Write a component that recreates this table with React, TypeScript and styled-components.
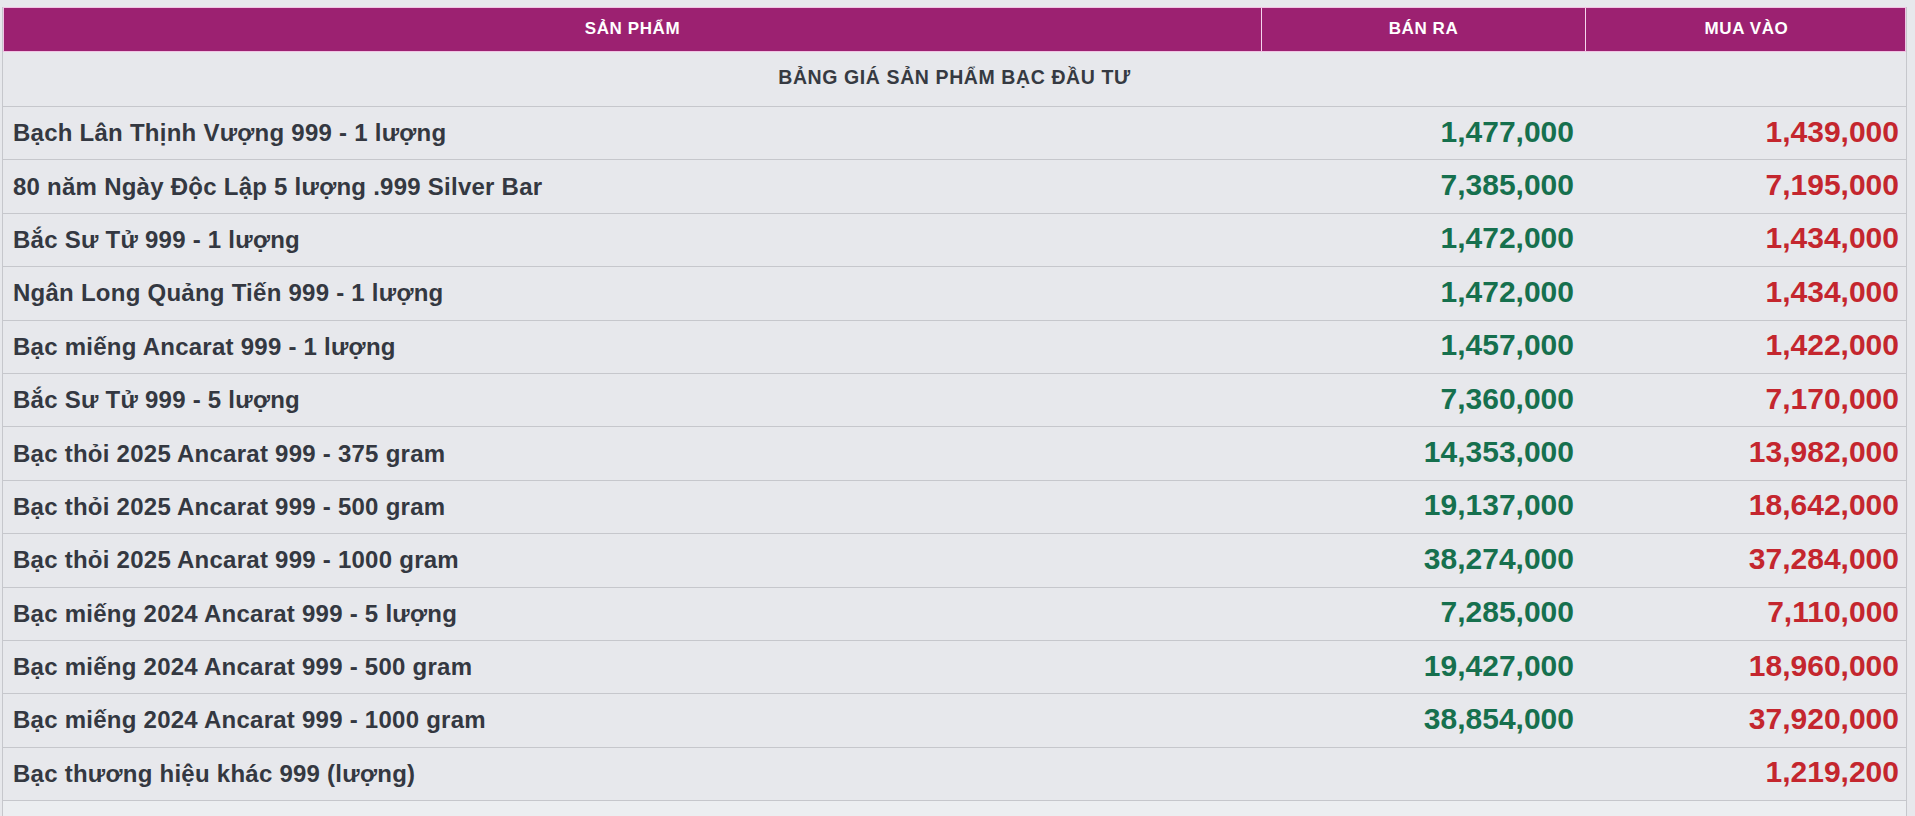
import React from "react";
import styled, { createGlobalStyle } from "styled-components";

const GlobalStyle = createGlobalStyle`
  html, body {
    margin: 0;
    padding: 0;
    background: #e7e8ec;
    font-family: "Liberation Sans", Arial, sans-serif;
  }
  * { box-sizing: border-box; }
`;

const Page = styled.div`
  min-height: 816px;
  padding: 7px 0 0 2px;
  background: #e7e8ec;
  overflow: hidden;
`;

const Table = styled.div`
  width: 1905px;
  border-left: 1px solid #c6c7cc;
  border-right: 1px solid #c6c7cc;
`;

const COLS = "1257px 324px 322px";

const HeaderRow = styled.div`
  display: grid;
  grid-template-columns: ${COLS};
  height: 45px;
  background: #9c2171;
  border: 1px solid #f1c3e4;
`;

const HeaderCell = styled.div<{ $first?: boolean }>`
  display: flex;
  align-items: center;
  justify-content: center;
  color: #ffffff;
  font-weight: 700;
  font-size: 17px;
  letter-spacing: 0.6px;
  border-left: ${(p) => (p.$first ? "none" : "1px solid #f5d6ec")};
  padding-bottom: 2px;
`;

const TitleRow = styled.div`
  display: flex;
  align-items: center;
  justify-content: center;
  height: 55px;
  border-bottom: 1px solid #c6c7cc;
  color: #363a42;
  font-weight: 700;
  font-size: 19.5px;
  letter-spacing: 0.6px;
  padding-bottom: 4px;
`;

const Row = styled.div`
  display: grid;
  grid-template-columns: ${COLS};
  height: 53.4px;
  border-bottom: 1px solid #c6c7cc;
  align-items: center;
`;

const NameCell = styled.div`
  padding-left: 10px;
  color: #343841;
  font-weight: 700;
  font-size: 24px;
  letter-spacing: 0.25px;
`;

const PriceCell = styled.div<{ $tone: "sell" | "buy" }>`
  text-align: right;
  padding-right: ${(p) => (p.$tone === "sell" ? "10px" : "7px")};
  color: ${(p) => (p.$tone === "sell" ? "#16704e" : "#c4262e")};
  font-weight: 700;
  font-size: 30px;
  padding-bottom: 3px;
`;

const EmptyRow = styled.div`
  height: 20px;
  background: #eceef1;
`;

type Item = { name: string; sell: string; buy: string };

const items: Item[] = [
  { name: "Bạch Lân Thịnh Vượng 999 - 1 lượng", sell: "1,477,000", buy: "1,439,000" },
  { name: "80 năm Ngày Độc Lập 5 lượng .999 Silver Bar", sell: "7,385,000", buy: "7,195,000" },
  { name: "Bắc Sư Tử 999 - 1 lượng", sell: "1,472,000", buy: "1,434,000" },
  { name: "Ngân Long Quảng Tiến 999 - 1 lượng", sell: "1,472,000", buy: "1,434,000" },
  { name: "Bạc miếng Ancarat 999 - 1 lượng", sell: "1,457,000", buy: "1,422,000" },
  { name: "Bắc Sư Tử 999 - 5 lượng", sell: "7,360,000", buy: "7,170,000" },
  { name: "Bạc thỏi 2025 Ancarat 999 - 375 gram", sell: "14,353,000", buy: "13,982,000" },
  { name: "Bạc thỏi 2025 Ancarat 999 - 500 gram", sell: "19,137,000", buy: "18,642,000" },
  { name: "Bạc thỏi 2025 Ancarat 999 - 1000 gram", sell: "38,274,000", buy: "37,284,000" },
  { name: "Bạc miếng 2024 Ancarat 999 - 5 lượng", sell: "7,285,000", buy: "7,110,000" },
  { name: "Bạc miếng 2024 Ancarat 999 - 500 gram", sell: "19,427,000", buy: "18,960,000" },
  { name: "Bạc miếng 2024 Ancarat 999 - 1000 gram", sell: "38,854,000", buy: "37,920,000" },
  { name: "Bạc thương hiệu khác 999 (lượng)", sell: "", buy: "1,219,200" },
];

export default function App() {
  return (
    <>
      <GlobalStyle />
      <Page>
        <Table>
          <HeaderRow>
            <HeaderCell $first>SẢN PHẨM</HeaderCell>
            <HeaderCell>BÁN RA</HeaderCell>
            <HeaderCell>MUA VÀO</HeaderCell>
          </HeaderRow>
          <TitleRow>BẢNG GIÁ SẢN PHẨM BẠC ĐẦU TƯ</TitleRow>
          {items.map((it) => (
            <Row key={it.name}>
              <NameCell>{it.name}</NameCell>
              <PriceCell $tone="sell">{it.sell}</PriceCell>
              <PriceCell $tone="buy">{it.buy}</PriceCell>
            </Row>
          ))}
          <EmptyRow />
        </Table>
      </Page>
    </>
  );
}
